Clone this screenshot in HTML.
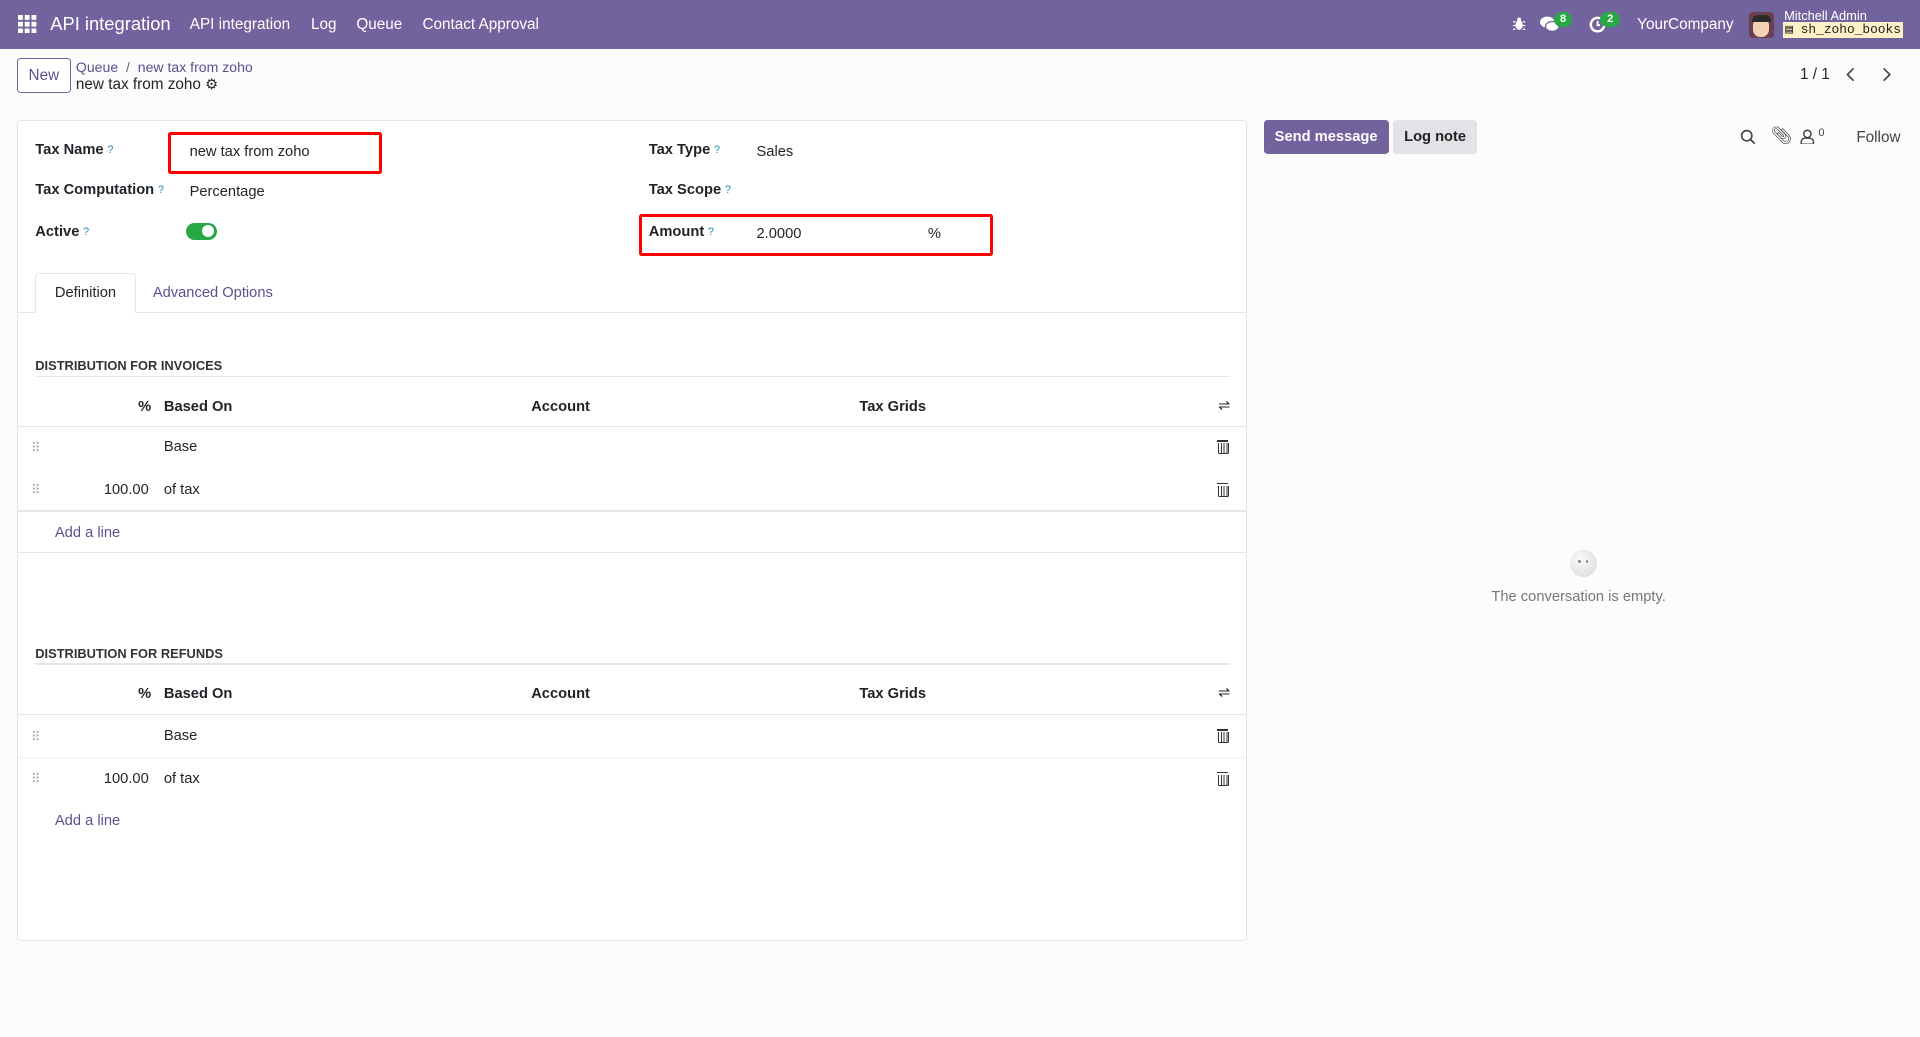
<!DOCTYPE html>
<html><head><meta charset="utf-8">
<style>
html,body{margin:0;padding:0;}
body{width:1568px;height:847px;zoom:1.22449;background:#fcfcfd;font-family:"Liberation Sans",sans-serif;color:#212529;font-size:12px;position:relative;overflow:hidden;}
.a{position:absolute;white-space:nowrap;line-height:15px;}
.nav{position:absolute;left:0;top:0;width:1568px;height:40px;background:#71639e;color:#fff;}
.nav .a{color:#fff;}
.q{color:#1f8fb3;font-size:9px;vertical-align:top;margin-left:3px;font-weight:normal;}
.lbl{font-weight:bold;font-size:12px;color:#1f2328;}
.sheet{position:absolute;left:14px;top:98px;width:1003px;height:669px;background:#fff;border:1px solid #e3e5e8;border-radius:3px;}
.hr{position:absolute;height:1px;background:#e4e6e9;}
.red{position:absolute;border:3px solid #f00;border-radius:2px;}
.purple{color:#5e4f8f;}
.trash{position:absolute;width:7px;height:8px;border:1.2px solid #333;border-top:none;border-radius:0 0 1px 1px;background:repeating-linear-gradient(90deg,transparent 0 1.5px,#333 1.5px 2.3px);}
.trash:before{content:"";position:absolute;left:-2px;top:-2.5px;width:9px;height:1.3px;background:#333;}
.drag{position:absolute;width:6px;height:9px;background-image:radial-gradient(circle,#aaa 0.8px,transparent 1px);background-size:3px 3px;}
</style></head><body>
<div class="nav">
  <svg class="a" style="left:15px;top:12px" width="15" height="15" viewBox="0 0 15 15" fill="#fff"><rect x="0" y="0" width="4" height="4"/><rect x="5.5" y="0" width="4" height="4"/><rect x="11" y="0" width="4" height="4"/><rect x="0" y="5.5" width="4" height="4"/><rect x="5.5" y="5.5" width="4" height="4"/><rect x="11" y="5.5" width="4" height="4"/><rect x="0" y="11" width="4" height="4"/><rect x="5.5" y="11" width="4" height="4"/><rect x="11" y="11" width="4" height="4"/></svg>
  <div class="a" style="left:41px;top:12px;font-size:15px">API integration</div>
  <div class="a" style="left:155px;top:13px;font-size:12.5px">API integration</div>
  <div class="a" style="left:254px;top:13px;font-size:12.5px">Log</div>
  <div class="a" style="left:291px;top:13px;font-size:12.5px">Queue</div>
  <div class="a" style="left:345px;top:13px;font-size:12.5px">Contact Approval</div>
  <svg class="a" style="left:1236px;top:14px" width="10" height="11" viewBox="0 0 10 11" fill="#fff"><ellipse cx="5" cy="6.5" rx="3" ry="4"/><circle cx="5" cy="2" r="1.6"/><path d="M0 4h2M8 4h2M0 7h2M8 7h2M0 10h2M8 10h2" stroke="#fff" stroke-width="1"/></svg>
  <svg class="a" style="left:1258px;top:13px" width="16" height="14" viewBox="0 0 16 14" fill="#fff"><ellipse cx="6" cy="5" rx="6" ry="4.5"/><ellipse cx="10" cy="8.5" rx="5.5" ry="4" fill="#fff" stroke="#71639e" stroke-width="1"/></svg>
  <div class="a" style="left:1269px;top:10px;background:#28a745;border-radius:7px;width:15px;height:12px;font-size:9px;text-align:center;line-height:12px;font-weight:bold">8</div>
  <svg class="a" style="left:1298px;top:13px" width="14" height="14" viewBox="0 0 14 14"><circle cx="7" cy="7" r="5.5" fill="none" stroke="#fff" stroke-width="2"/><path d="M7 4v3.5h2" stroke="#fff" stroke-width="1.5" fill="none"/></svg>
  <div class="a" style="left:1307px;top:10px;background:#28a745;border-radius:7px;width:16px;height:12px;font-size:9px;text-align:center;line-height:12px;font-weight:bold">2</div>
  <div class="a" style="left:1337px;top:13px;font-size:12.5px">YourCompany</div>
  <div class="a" style="left:1428px;top:10px;width:21px;height:21px;background:#6b3f4f;border-radius:3px;overflow:hidden"><div style="position:absolute;left:4px;top:5px;width:13px;height:15px;background:#f3d2b3;border-radius:6px"></div><div style="position:absolute;left:3px;top:2px;width:15px;height:6px;background:#2b2b2b;border-radius:5px 5px 0 0"></div></div>
  <div class="a" style="left:1457px;top:7px;font-size:10.5px;line-height:11px">Mitchell Admin</div>
  <div class="a" style="left:1456px;top:18px;font-size:10.5px;line-height:13px;background:#fdf1c7;color:#222;padding:0 2px;font-family:'Liberation Mono',monospace">▤ sh_zoho_books</div>
</div>

<div class="a" style="left:14px;top:47px;width:42px;height:27px;border:1px solid #71639e;border-radius:3px;background:#fff;color:#5e4f8f;font-size:12.5px;text-align:center;line-height:27px">New</div>
<div class="a purple" style="left:62px;top:47px;font-size:11.5px">Queue <span style="color:#666">&nbsp;/&nbsp;</span> new tax from zoho</div>
<div class="a" style="left:62px;top:62px;font-size:12.5px">new tax from zoho <span style="font-size:12px">⚙</span></div>
<div class="a" style="left:1470px;top:54px;font-size:12.5px">1 / 1</div>
<svg class="a" style="left:1507px;top:54px" width="10" height="14" viewBox="0 0 10 14"><path d="M7 2L2 7l5 5" stroke="#444" stroke-width="1.4" fill="none"/></svg>
<svg class="a" style="left:1535px;top:54px" width="10" height="14" viewBox="0 0 10 14"><path d="M3 2l5 5-5 5" stroke="#444" stroke-width="1.4" fill="none"/></svg>

<div class="sheet">
  <div class="a lbl" style="left:14px;top:16px">Tax Name<span class="q">?</span></div>
  <div class="a" style="left:140px;top:18px">new tax from zoho</div>
  <div class="a lbl" style="left:14px;top:49px">Tax Computation<span class="q">?</span></div>
  <div class="a" style="left:140px;top:51px">Percentage</div>
  <div class="a lbl" style="left:14px;top:83px">Active<span class="q">?</span></div>
  <div class="a" style="left:137px;top:83px;width:25px;height:14px;background:#28a745;border-radius:7px"><div style="position:absolute;right:2px;top:2px;width:10px;height:10px;background:#fff;border-radius:50%"></div></div>
  <div class="a lbl" style="left:515px;top:16px">Tax Type<span class="q">?</span></div>
  <div class="a" style="left:603px;top:18px">Sales</div>
  <div class="a lbl" style="left:515px;top:49px">Tax Scope<span class="q">?</span></div>
  <div class="a lbl" style="left:515px;top:83px">Amount<span class="q">?</span></div>
  <div class="a" style="left:603px;top:85px">2.0000</div>
  <div class="a" style="left:743px;top:85px">%</div>

  <div class="hr" style="left:0;top:156px;width:1003px"></div>
  <div class="a" style="left:14px;top:124px;width:82px;height:33px;background:#fff;border:1px solid #e4e6e9;border-bottom:none;border-radius:3px 3px 0 0;box-sizing:border-box;text-align:center;line-height:32px">Definition</div>
  <div class="a purple" style="left:110px;top:133px">Advanced Options</div>

  <div class="a" style="left:14px;top:193px;font-size:10.5px;font-weight:bold;color:#333">DISTRIBUTION FOR INVOICES</div>
  <div class="hr" style="left:14px;top:208px;width:976px"></div>
  <div class="a lbl" style="left:98px;top:226px">%</div>
  <div class="a lbl" style="left:119px;top:226px">Based On</div>
  <div class="a lbl" style="left:419px;top:226px">Account</div>
  <div class="a lbl" style="left:687px;top:226px">Tax Grids</div>
  <div class="a" style="left:980px;top:225px;font-size:12px">⇌</div>
  <div class="hr" style="left:0;top:249px;width:1003px"></div>
  <div class="drag" style="left:11px;top:261px"></div>
  <div class="a" style="left:119px;top:259px">Base</div>
  <div class="trash" style="left:980px;top:263px"></div>
  <div class="drag" style="left:11px;top:296px"></div>
  <div class="a" style="left:70px;top:294px">100.00</div>
  <div class="a" style="left:119px;top:294px">of tax</div>
  <div class="trash" style="left:980px;top:298px"></div>
  <div class="hr" style="left:0;top:318px;width:1003px"></div>
  <div class="a purple" style="left:30px;top:329px">Add a line</div>
  <div class="hr" style="left:0;top:352px;width:1003px"></div>

  <div class="a" style="left:14px;top:428px;font-size:10.5px;font-weight:bold;color:#333">DISTRIBUTION FOR REFUNDS</div>
  <div class="hr" style="left:14px;top:443px;width:976px"></div>
  <div class="a lbl" style="left:98px;top:461px">%</div>
  <div class="a lbl" style="left:119px;top:461px">Based On</div>
  <div class="a lbl" style="left:419px;top:461px">Account</div>
  <div class="a lbl" style="left:687px;top:461px">Tax Grids</div>
  <div class="a" style="left:980px;top:460px;font-size:12px">⇌</div>
  <div class="hr" style="left:0;top:484px;width:1003px"></div>
  <div class="drag" style="left:11px;top:497px"></div>
  <div class="a" style="left:119px;top:495px">Base</div>
  <div class="trash" style="left:980px;top:499px"></div>
  <div class="hr" style="left:0;top:519px;width:1003px;background:#f0f1f3"></div>
  <div class="drag" style="left:11px;top:532px"></div>
  <div class="a" style="left:70px;top:530px">100.00</div>
  <div class="a" style="left:119px;top:530px">of tax</div>
  <div class="trash" style="left:980px;top:534px"></div>
  <div class="a purple" style="left:30px;top:564px">Add a line</div>
</div>

<div class="red" style="left:137px;top:108px;width:170px;height:29px"></div>
<div class="red" style="left:522px;top:175px;width:284px;height:29px"></div>

<div class="a" style="left:1032px;top:98px;width:102px;height:28px;background:#71639e;color:#fff;border-radius:3px;font-weight:bold;font-size:12px;text-align:center;line-height:28px">Send message</div>
<div class="a" style="left:1138px;top:98px;width:68px;height:28px;background:#e2e3e6;color:#222;border-radius:3px;font-weight:bold;font-size:12px;text-align:center;line-height:28px">Log note</div>
<svg class="a" style="left:1421px;top:105px" width="13" height="13" viewBox="0 0 13 13"><circle cx="5.5" cy="5.5" r="4.2" fill="none" stroke="#444" stroke-width="1.3"/><path d="M8.5 8.5l3.5 3.5" stroke="#444" stroke-width="1.4"/></svg>
<div class="a" style="left:1446px;top:103px;font-size:14px;color:#444">📎︎</div>
<svg class="a" style="left:1470px;top:105px" width="12" height="13" viewBox="0 0 12 13"><circle cx="6" cy="4" r="3" fill="none" stroke="#444" stroke-width="1.2"/><path d="M1 12.5v-2a3 3 0 013-3h4a3 3 0 013 3v2z" fill="none" stroke="#444" stroke-width="1.2"/></svg>
<div class="a" style="left:1485px;top:101px;font-size:9px;color:#444">0</div>
<div class="a" style="left:1516px;top:105px;font-size:12.5px;color:#444">Follow</div>

<div class="a" style="left:1282px;top:449px;width:22px;height:22px;border-radius:50%;background:radial-gradient(circle at 40% 35%,#fafafa,#d7d7da);"><div style="position:absolute;left:7px;top:8px;width:2px;height:3px;background:#888;border-radius:1px"></div><div style="position:absolute;left:13px;top:8px;width:2px;height:3px;background:#888;border-radius:1px"></div></div>
<div class="a" style="left:1218px;top:480px;font-size:12px;color:#777">The conversation is empty.</div>
</body></html>
